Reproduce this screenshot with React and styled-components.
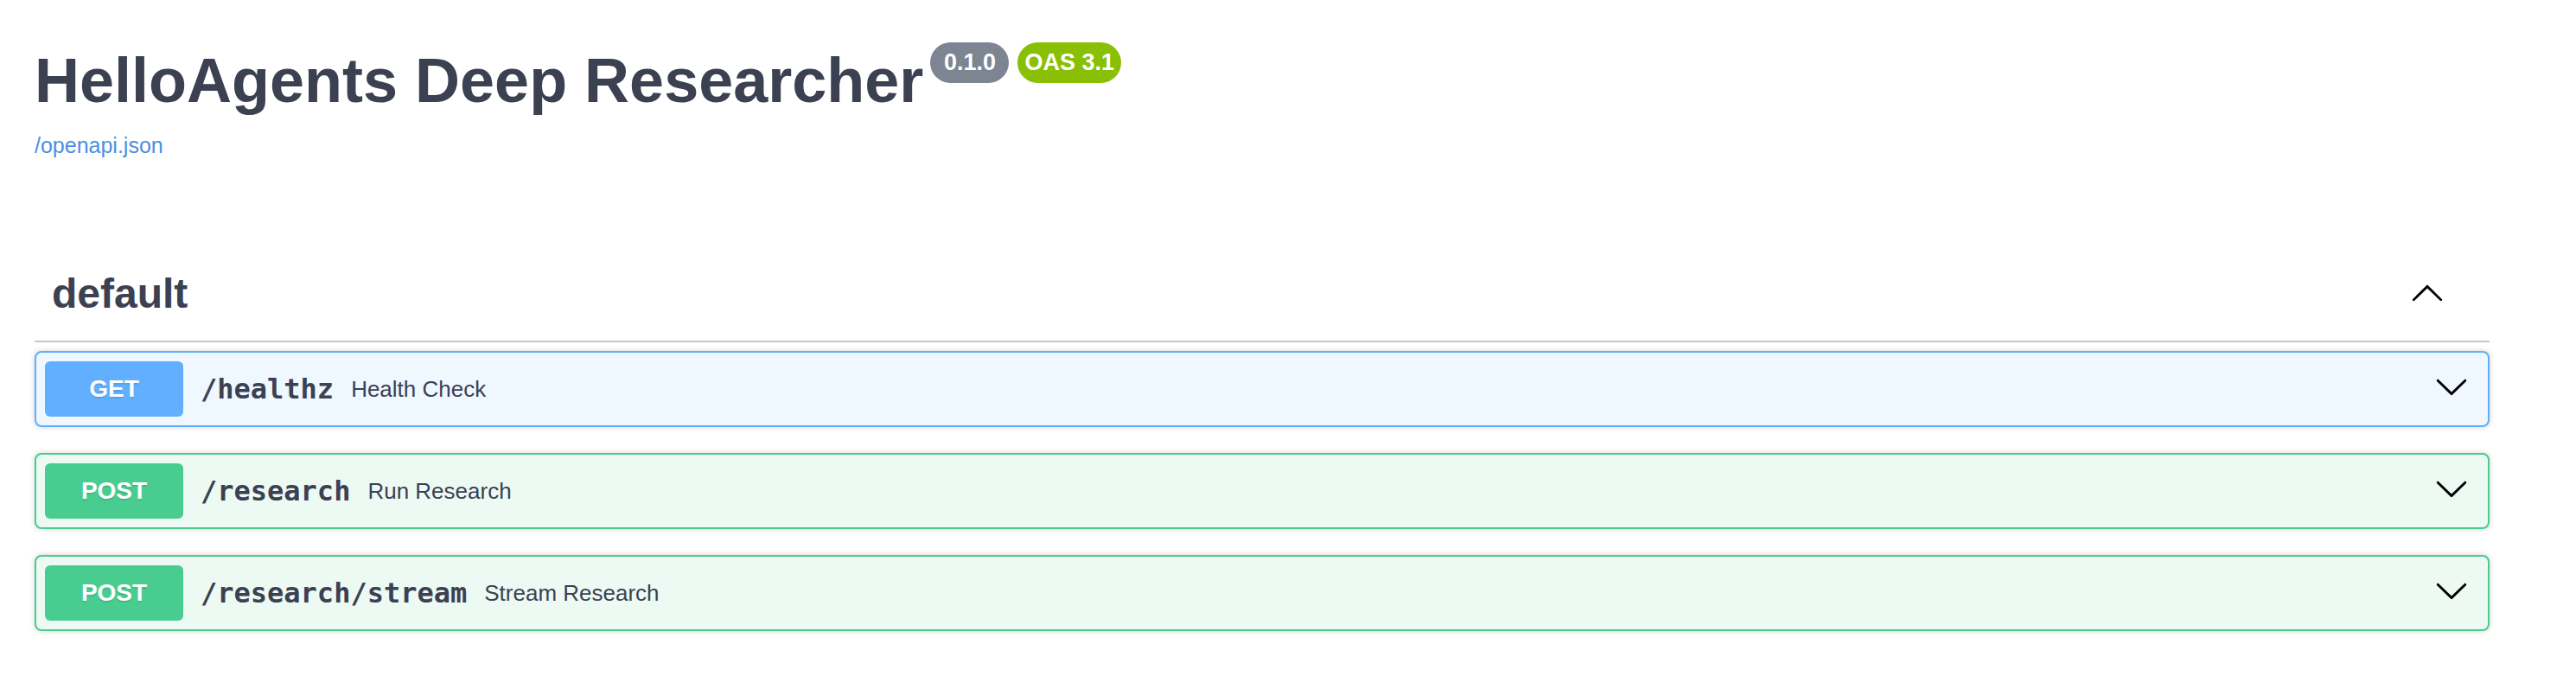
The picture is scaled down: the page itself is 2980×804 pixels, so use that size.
import styled, { createGlobalStyle } from "styled-components";

const GlobalStyle = createGlobalStyle`
  body {
    margin: 0;
    background: #fff;
    font-family: "Liberation Sans", Arial, sans-serif;
    color: #3b4151;
  }
`;

const operations = [
  { method: "get", path: "/healthz", summary: "Health Check" },
  { method: "post", path: "/research", summary: "Run Research" },
  { method: "post", path: "/research/stream", summary: "Stream Research" },
];

const methodColors = {
  get: { main: "#61affe", soft: "#eff7ff" },
  post: { main: "#49cc90", soft: "#edfaf4" },
};

function ArrowUp() {
  return (
    <svg width="40" height="40" viewBox="0 0 20 20" aria-hidden="true">
      <path d="M17.418 14.908c.272.268.709.268.979 0s.271-.701 0-.969l-7.908-7.83c-.27-.268-.707-.268-.979 0l-7.908 7.83c-.27.268-.27.701 0 .969.271.268.709.268.979 0L10 7.767l7.418 7.141z" />
    </svg>
  );
}

function ArrowDown() {
  return (
    <svg width="40" height="40" viewBox="0 0 20 20" aria-hidden="true">
      <path d="M17.418 6.109c.272-.268.709-.268.979 0s.271.701 0 .969l-7.908 7.83c-.27.268-.707.268-.979 0l-7.908-7.83c-.27-.268-.27-.701 0-.969.271-.268.709-.268.979 0L10 13.25l7.418-7.141z" />
    </svg>
  );
}

function Operation({ method, path, summary }) {
  return (
    <OpBlock $method={method}>
      <Summary>
        <Method $method={method}>{method.toUpperCase()}</Method>
        <Path>{path}</Path>
        <Description>{summary}</Description>
        <ArrowButton>
          <ArrowDown />
        </ArrowButton>
      </Summary>
    </OpBlock>
  );
}

export default function App() {
  return (
    <>
      <GlobalStyle />
      <Wrapper>
        <Info>
          <TitleRow>
            <Title>HelloAgents Deep Researcher</Title>
            <Badges>
              <Badge $color="#7d8492">{" 0.1.0 "}</Badge>
              <Badge $color="#89bf04">OAS 3.1</Badge>
            </Badges>
          </TitleRow>
          <SpecLink href="#">/openapi.json</SpecLink>
        </Info>

        <TagSection>
          <Tag>
            <TagName>default</TagName>
            <TagToggle>
              <ArrowUp />
            </TagToggle>
          </Tag>
          <OpList>
            {operations.map((op) => (
              <Operation key={op.path} {...op} />
            ))}
          </OpList>
        </TagSection>
      </Wrapper>
    </>
  );
}

const Wrapper = styled.div`
  max-width: 2920px;
  box-sizing: border-box;
  padding: 0 40px 60px;
`;

const Info = styled.div`
  padding-top: 49px;
  margin-bottom: 110px;
  display: flex;
  flex-direction: column;
  align-items: flex-start;
`;

const TitleRow = styled.div`
  display: flex;
  align-items: flex-start;
`;

const Title = styled.h2`
  margin: 8px 0 0;
  font-size: 72px;
  line-height: 72px;
  font-weight: 700;
  color: #3b4151;
`;

const Badges = styled.div`
  display: flex;
  gap: 10px;
  margin-left: 8px;
`;

const Badge = styled.span`
  display: inline-block;
  height: 47px;
  line-height: 47px;
  padding: 0 8px;
  border-radius: 114px;
  background: ${(p) => p.$color};
  color: #fff;
  font-size: 27px;
  font-weight: 700;
  white-space: pre;
`;

const SpecLink = styled.a`
  margin-top: 25px;
  font-size: 25px;
  line-height: 28px;
  color: #4990e2;
  text-decoration: none;
`;

const TagSection = styled.section`
  display: flex;
  flex-direction: column;
`;

const Tag = styled.div`
  display: flex;
  align-items: center;
  padding: 20px 40px 26px 20px;
  margin-bottom: 10px;
  border-bottom: 2px solid rgba(59, 65, 81, 0.3);
`;

const TagName = styled.h3`
  flex: 1;
  margin: 0;
  font-size: 48px;
  line-height: 56px;
  font-weight: 700;
  color: #3b4151;
`;

const TagToggle = styled.button`
  display: flex;
  border: none;
  background: none;
  padding: 0 12px 4px 0;
  color: #000;
  fill: currentColor;
  cursor: pointer;
`;

const OpList = styled.div`
  display: flex;
  flex-direction: column;
  gap: 30px;
`;

const OpBlock = styled.div`
  border: 2px solid ${(p) => methodColors[p.$method].main};
  background: ${(p) => methodColors[p.$method].soft};
  border-radius: 8px;
  box-shadow: 0 0 6px rgba(0, 0, 0, 0.19);
`;

const Summary = styled.div`
  display: flex;
  align-items: center;
  padding: 10px 20px 10px 10px;
`;

const Method = styled.span`
  display: flex;
  align-items: center;
  justify-content: center;
  min-width: 160px;
  height: 64px;
  border-radius: 6px;
  background: ${(p) => methodColors[p.$method].main};
  color: #fff;
  font-size: 28px;
  font-weight: 700;
  text-shadow: 0 2px 0 rgba(0, 0, 0, 0.1);
`;

const Path = styled.span`
  padding: 0 20px;
  font-family: "DejaVu Sans Mono", "Liberation Mono", monospace;
  font-size: 32px;
  font-weight: 700;
  color: #3b4151;
`;

const Description = styled.span`
  flex: 1;
  font-size: 26px;
  color: #3b4151;
`;

const ArrowButton = styled.button`
  display: flex;
  border: none;
  background: none;
  padding: 0 2px 6px 0;
  color: #000;
  fill: currentColor;
  cursor: pointer;
`;
